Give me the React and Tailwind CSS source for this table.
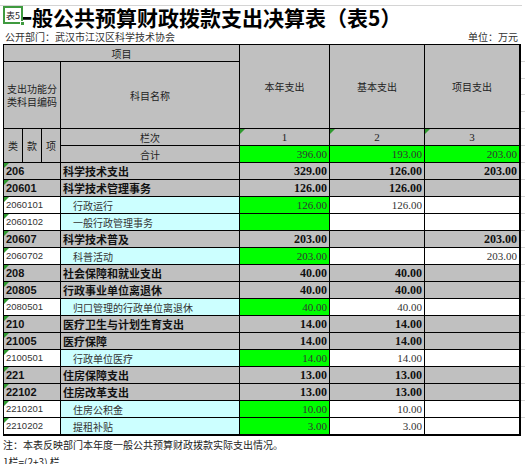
const rows = [
  { code: "206", name: "科学技术支出", a: "329.00", b: "126.00", c: "203.00", bold: true },
  { code: "20601", name: "科学技术管理事务", a: "126.00", b: "126.00", c: "", bold: true },
  { code: "2060101", name: "行政运行", a: "126.00", b: "126.00", c: "" },
  { code: "2060102", name: "一般行政管理事务", a: "", b: "", c: "" },
  { code: "20607", name: "科学技术普及", a: "203.00", b: "", c: "203.00", bold: true },
  { code: "2060702", name: "科普活动", a: "203.00", b: "", c: "203.00" },
  { code: "208", name: "社会保障和就业支出", a: "40.00", b: "40.00", c: "", bold: true },
  { code: "20805", name: "行政事业单位离退休", a: "40.00", b: "40.00", c: "", bold: true },
  { code: "2080501", name: "归口管理的行政单位离退休", a: "40.00", b: "40.00", c: "" },
  { code: "210", name: "医疗卫生与计划生育支出", a: "14.00", b: "14.00", c: "", bold: true },
  { code: "21005", name: "医疗保障", a: "14.00", b: "14.00", c: "", bold: true },
  { code: "2100501", name: "行政单位医疗", a: "14.00", b: "14.00", c: "" },
  { code: "221", name: "住房保障支出", a: "13.00", b: "13.00", c: "", bold: true },
  { code: "22102", name: "住房改革支出", a: "13.00", b: "13.00", c: "", bold: true },
  { code: "2210201", name: "住房公积金", a: "10.00", b: "10.00", c: "" },
  { code: "2210202", name: "提租补贴", a: "3.00", b: "3.00", c: "" },
];

function Tri() {
  return (
    <span className="absolute left-0 top-0 w-0 h-0 border-t-[5px] border-r-[5px] border-t-[#2f9a2f] border-r-transparent" />
  );
}

function Val({ v, bg, bold }) {
  return (
    <div
      className={
        "flex items-center justify-end pr-[2px] font-['Liberation_Serif',serif] " +
        bg +
        (bold ? " text-[12px] font-bold text-[#111]" : " text-[11px] text-[#333]")
      }
    >
      {v}
    </div>
  );
}

export default function App() {
  const head = "bg-[#c0c0c0] flex items-center justify-center text-[10px] text-[#222]";

  return (
    <div className="w-[532px] h-[470px] bg-white overflow-hidden font-['Noto_Sans_CJK_SC',sans-serif]">
      {/* top sheet line */}
      <div className="h-[6px] w-[522px] border-b border-[#d4d4d4]" />

      {/* title */}
      <div className="relative h-[23px] flex items-center pl-[11px] text-[21px] font-bold text-black leading-[23px] whitespace-nowrap">
        一般公共预算财政拨款支出决算表（表5）
        <div className="absolute left-[3px] top-0 w-[20px] h-[18px] bg-white border-2 border-[#3f9a3f] flex items-center justify-center text-[9px] leading-none font-normal text-[#222]">
          表5
          <span className="absolute right-[-4px] bottom-[-4px] w-[5px] h-[5px] bg-[#3f9a3f] border border-white" />
        </div>
      </div>

      {/* sub heading */}
      <div className="h-[15px] w-[521px] flex items-center justify-between pl-[5px] text-[10px] leading-[15px] text-[#333]">
        <span>公开部门：武汉市江汉区科学技术协会</span>
        <span className="pr-[3px]">单位：万元</span>
      </div>

      <div className="flex items-start">
        {/* table */}
        <div className="ml-[3px] w-[518px] border-l border-t border-r-2 border-b-2 border-black bg-black grid grid-cols-[56px_178px_89px_94px_94px] grid-rows-[16px_66px_16px_16px] auto-rows-[16px] gap-px">
          <div className={head + " col-span-2"}>项目</div>
          <div className={head + " row-span-2"}>本年支出</div>
          <div className={head + " row-span-2"}>基本支出</div>
          <div className={head + " row-span-2"}>项目支出</div>

          <div className={head + " flex-col leading-[13px] text-center"}>
            <span>支出功能分</span>
            <span>类科目编码</span>
          </div>
          <div className={head}>科目名称</div>

          <div className="row-span-2 flex gap-px">
            <div className={head + " w-[18px]"}>类</div>
            <div className={head + " w-[18px]"}>款</div>
            <div className={head + " w-[18px]"}>项</div>
          </div>
          <div className={head}>栏次</div>
          <div className={head + " relative font-['Liberation_Serif',serif] text-[11px]"}>
            <Tri />1
          </div>
          <div className={head + " relative font-['Liberation_Serif',serif] text-[11px]"}>
            <Tri />2
          </div>
          <div className={head + " relative font-['Liberation_Serif',serif] text-[11px]"}>
            <Tri />3
          </div>

          <div className={head}>合计</div>
          <Val v="396.00" bg="bg-[#00ff00]" />
          <Val v="193.00" bg="bg-[#00ff00]" />
          <Val v="203.00" bg="bg-[#00ff00]" />

          {rows.map((r) => (
            <div key={r.code} className="contents">
              <div
                className={
                  "relative flex items-center pl-[2px] font-['Liberation_Sans',sans-serif] " +
                  (r.bold
                    ? "bg-[#c0c0c0] text-[11px] font-bold text-[#111]"
                    : "bg-white text-[9.5px] text-[#333]")
                }
              >
                <Tri />
                {r.code}
              </div>
              <div
                className={
                  "flex items-center whitespace-nowrap " +
                  (r.bold
                    ? "bg-[#c0c0c0] pl-[2px] text-[11px] font-bold text-[#111]"
                    : "bg-[#ccffff] pl-[12px] text-[10px] text-[#333]")
                }
              >
                {r.name}
              </div>
              <Val v={r.a} bold={r.bold} bg={r.bold ? "bg-[#c0c0c0]" : "bg-[#00ff00]"} />
              <Val v={r.b} bold={r.bold} bg={r.bold ? "bg-[#c0c0c0]" : "bg-white"} />
              <Val v={r.c} bold={r.bold} bg={r.bold ? "bg-[#c0c0c0]" : "bg-white"} />
            </div>
          ))}
        </div>

        {/* sheet gridline ticks to the right */}
        <div className="w-[4px] flex flex-col">
          <div className="h-[18px] border-b border-[#d4d4d4]" />
          <div className="h-[17px] border-b border-[#d4d4d4]" />
          <div className="h-[16px] border-b border-[#d4d4d4]" />
          <div className="h-[17px] border-b border-[#d4d4d4]" />
          <div className="h-[17px] border-b border-[#d4d4d4]" />
          <div className="h-[17px] border-b border-[#d4d4d4]" />
          <div className="h-[17px] border-b border-[#d4d4d4]" />
          {rows.slice(0, 15).map((r) => (
            <div key={r.code} className="h-[17px] border-b border-[#d4d4d4]" />
          ))}
        </div>
      </div>

      {/* notes */}
      <div className="h-[16px] pl-[3px] flex items-center text-[10px] text-[#222] whitespace-nowrap">
        注：本表反映部门本年度一般公共预算财政拨款实际支出情况。
      </div>
      <div className="h-[12px] overflow-hidden pl-[3px] text-[10px] leading-[20px] text-[#222] whitespace-nowrap">
        1栏=(2+3) 栏
      </div>
    </div>
  );
}
